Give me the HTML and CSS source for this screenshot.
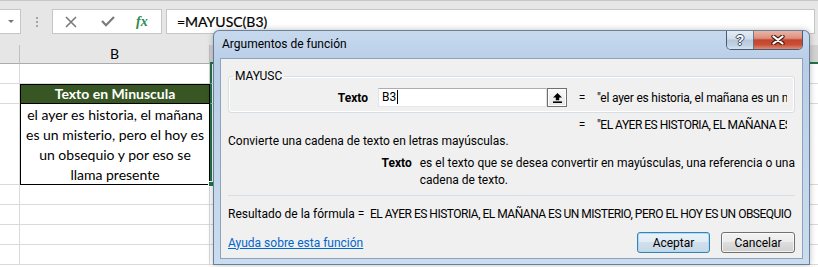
FILE: index.html
```html
<!DOCTYPE html>
<html lang="es">
<head>
  <meta charset="UTF-8" />
  <title>Argumentos de función</title>
  <link rel="stylesheet" href="styles.css">
</head>
<body>
  <div class="excel">
    <div class="formula-bar">
      <div class="name-box"><span class="drop"></span></div>
      <div class="grip"><i></i><i></i><i></i></div>
      <div class="fbtns">
        <svg class="ico-x" width="12" height="12" viewBox="0 0 12 12"><path d="M1 1L11 11M11 1L1 11" stroke="#7a7a7a" stroke-width="1.6"/></svg>
        <svg class="ico-ok" width="14" height="11" viewBox="0 0 14 11"><path d="M1 5L5 9.2L13 1" fill="none" stroke="#7a7a7a" stroke-width="2.2"/></svg>
        <span class="fx">fx</span>
      </div>
      <div class="finput">=MAYUSC(B3)</div>
    </div>

    <div class="col-heads">
      <div class="ch"></div>
      <div class="ch">B</div>
      <div class="ch ch-sel"></div>
    </div>

    <div class="sheet">
      <div class="cell"></div><div class="cell"></div><div class="cell sel"></div>
      <div class="cell"></div><div class="cell head">Texto en Minuscula</div><div class="cell sel"></div>
      <div class="cell"></div>
      <div class="cell body">el ayer es historia, el mañana<br>es un misterio, pero el hoy es<br>un obsequio y por eso se<br>llama presente</div>
      <div class="cell sel handle"></div>
      <div class="cell"></div><div class="cell"></div><div class="cell"></div>
      <div class="cell"></div><div class="cell"></div><div class="cell"></div>
      <div class="cell"></div><div class="cell"></div><div class="cell"></div>
      <div class="cell"></div><div class="cell"></div><div class="cell"></div>
    </div>
  </div>

  <div class="dlg">
    <div class="dlg-title">Argumentos de función</div>
    <div class="dlg-ctrl">
      <span class="btn-help">?</span>
      <span class="btn-close">
        <svg width="14" height="10" viewBox="0 0 14 10"><path d="M2.5 1.5L11.5 8.5M11.5 1.5L2.5 8.5" stroke="#4a1e15" stroke-width="4.4" stroke-linecap="round"/><path d="M2.5 1.5L11.5 8.5M11.5 1.5L2.5 8.5" stroke="#fff" stroke-width="2.2" stroke-linecap="round"/></svg>
      </span>
    </div>

    <div class="dlg-body">
      <fieldset class="fgroup">
        <legend>MAYUSC</legend>
        <div class="arg-row">
          <label class="arg-name" for="arg1">Texto</label>
          <div class="arg-input" id="arg1">B3<span class="caret"></span></div>
          <button class="ref-btn" type="button">
            <svg width="9" height="10" viewBox="0 0 9 10"><path d="M4.5 0L9 4.5H6.2V7.2H2.8V4.5H0Z" fill="#000"/><rect x="0" y="8.4" width="9" height="1.6" fill="#000"/></svg>
          </button>
          <span class="eq">=</span>
          <span class="arg-val">"el ayer es historia, el mañana es un misterio, pero el hoy es un obsequio y por eso se llama presente"</span>
        </div>
      </fieldset>

      <div class="res-row">
        <span class="eq">=</span>
        <span class="arg-val caps">"EL AYER ES HISTORIA, EL MAÑANA ES UN MISTERIO, PERO EL HOY ES UN OBSEQUIO Y POR ESO SE LLAMA PRESENTE"</span>
      </div>

      <p class="fn-desc">Convierte una cadena de texto en letras mayúsculas.</p>

      <div class="arg-desc">
        <b>Texto</b>
        <span>es el texto que se desea convertir en mayúsculas, una referencia o una<br>cadena de texto.</span>
      </div>

      <hr class="sep">

      <div class="result">
        <span class="result-label">Resultado de la fórmula =</span>
        <span class="result-val caps">EL AYER ES HISTORIA, EL MAÑANA ES UN MISTERIO, PERO EL HOY ES UN OBSEQUIO Y POR ESO SE LLAMA PRESENTE</span>
      </div>

      <div class="dlg-foot">
        <a href="#" class="help-link">Ayuda sobre esta función</a>
        <div class="actions">
          <button type="button" class="btn default">Aceptar</button>
          <button type="button" class="btn">Cancelar</button>
        </div>
      </div>
    </div>
  </div>
</body>
</html>
```

FILE: styles.css
```css
*, *::before, *::after { box-sizing: border-box; }
html { overflow: hidden; }
body {
  margin: 0;
  width: 818px; height: 267px;
  overflow: hidden;
  position: relative;
  background: #fff;
  font-family: Lato, sans-serif;
  color: #000;
}

/* barra de fórmulas */
.formula-bar {
  height: 45px;
  background: #e6e6e6;
  border-top: 1px solid #c6c6c6;
  padding-top: 8px;
  display: flex; align-items: flex-start;
}
.name-box {
  width: 21px; height: 25px;
  background: #fff;
  border: 1px solid #c6c6c6; border-left: none;
  display: flex; align-items: center; justify-content: flex-end;
  padding-right: 6px;
}
.drop {
  width: 0; height: 0;
  border-left: 3px solid transparent;
  border-right: 3px solid transparent;
  border-top: 3px solid #777;
}
.grip {
  width: 31px; height: 25px;
  display: flex; flex-direction: column; align-items: center; justify-content: center;
  gap: 2px;
}
.grip i { width: 2px; height: 2px; background: #a6a6a6; }
.fbtns {
  width: 110px; height: 25px;
  background: #fff;
  border: 1px solid #c6c6c6;
  display: flex; align-items: center;
  padding-left: 12px;
}
.ico-ok { margin-left: 24px; }
.fx {
  margin-left: 21px;
  font-family: "Liberation Serif", serif;
  font-style: italic; font-weight: bold;
  font-size: 14px;
  color: #2d8a55;
}
.finput {
  flex: 1;
  margin: 0 3px 0 4px;
  height: 25px;
  background: #fff;
  border: 1px solid #c6c6c6;
  padding-left: 10px;
  font-size: 14px; line-height: 23px;
  -webkit-text-stroke: .2px #000;
}

/* cabeceras */
.col-heads {
  height: 19px;
  display: grid; grid-template-columns: 20px 190px 1fr;
  background: #e6e6e6;
}
.ch {
  border-right: 1px solid #c0c0c0;
  border-bottom: 1px solid #ababab;
  font-size: 14px; line-height: 18px;
  text-align: center;
}
.ch-sel { background: #d2d2d2; border-bottom: 2px solid #217346; border-right: none; }

/* hoja */
.sheet {
  display: grid;
  grid-template-columns: 20px 190px 1fr;
  grid-template-rows: 20px 20px 81px;
  grid-auto-rows: 20px;
  height: 203px;
  overflow: hidden;
}
.cell {
  border-right: 1px solid #dadada;
  border-bottom: 1px solid #dadada;
  font-size: 14px; line-height: 20px;
  white-space: nowrap;
}
.cell:nth-child(3n) { border-right: none; }
.cell.head {
  background: #375623;
  color: #fff; font-weight: bold;
  text-align: center;
  border: 1px solid #000;
  line-height: 18px;
}
.cell.body {
  border: 1px solid #000; border-top: none;
  text-align: center;
  padding-top: 1px;
}
.cell.sel { border-left: 2px solid #217346; }
.cell.handle { position: relative; }
.cell.handle::after {
  content: '';
  position: absolute; left: -4px; bottom: -3px;
  width: 6px; height: 6px;
  background: #217346;
  border: 1px solid #fff;
}

/* ventana de diálogo */
.dlg {
  position: absolute;
  left: 213px; top: 30px;
  width: 597px; height: 235px;
  border: 1px solid rgba(45,65,95,.6);
  border-radius: 6px 6px 0 0;
  background: linear-gradient(180deg, #c6d9ee 0%, #b8cee7 14%, #c3d6eb 60%, #cadcef 100%);
  box-shadow: 0 0 6px rgba(0,0,0,.25);
  padding: 0 6px 5px;
  display: flex; flex-direction: column;
  font-family: Roboto, "Noto Sans", sans-serif;
  font-size: 12px;
}
.dlg-title {
  height: 27px; line-height: 27px;
  padding-left: 2px;
}
.dlg-ctrl {
  position: absolute; top: 0; right: 6px;
  display: flex;
  border: 1px solid rgba(35,50,70,.75); border-top: none;
  border-radius: 0 0 5px 5px;
  overflow: hidden;
}
.btn-help, .btn-close {
  height: 18px;
  display: flex; align-items: center; justify-content: center;
}
.btn-help {
  width: 27px;
  border-right: 1px solid rgba(35,50,70,.6);
  background: linear-gradient(180deg, #e4ecf5 0%, #d0dcea 45%, #b5c7dc 50%, #c2d2e4 80%, #d6e2ef 100%);
  color: #fff;
  font: bold 14px "Liberation Sans", sans-serif;
  text-shadow: 1px 0 0 #3c4b60, -1px 0 0 #3c4b60, 0 1px 0 #3c4b60, 0 -1px 0 #3c4b60;
}
.btn-close {
  width: 48px;
  background: linear-gradient(180deg, #e9b4a7 0%, #dd8f7d 40%, #c6432b 50%, #c94e36 75%, #de8c75 100%);
}

.dlg-body {
  flex: 1;
  background: #f0f0f0;
  border: 1px solid #8ea2ba;
  padding: 0 7px 4px;
}
.fgroup {
  margin: 10px 0 0;
  padding: 5px 0;
  border: 1px solid #d5dfe5;
  border-radius: 3px;
  box-shadow: inset 0 0 0 1px #fff;
}
.fgroup legend {
  margin-left: 4px;
  padding: 0 2px;
  line-height: 14px;
}
.arg-row {
  display: flex; align-items: center;
  height: 19px;
}
.arg-name {
  width: 139px;
  text-align: right;
  font-weight: bold;
}
.arg-input {
  margin-left: 10px;
  width: 169px; height: 19px;
  background: #fff;
  border: 1px solid #abadb3;
  border-color: #abadb3 #dbdfe6 #e3e9ef #e2e3ea;
  padding-left: 3px;
  line-height: 17px;
}
.caret {
  display: inline-block;
  width: 1px; height: 14px;
  background: #000;
  vertical-align: -3px;
  margin-left: 1px;
}
.ref-btn {
  width: 20px; height: 19px;
  padding: 0;
  border: 1px solid #707070;
  background: linear-gradient(180deg, #fafafa, #e6e6e6);
  box-shadow: inset 0 0 0 1px #fff;
  display: flex; align-items: center; justify-content: center;
}
.eq { width: 30px; text-align: center; }
.arg-val {
  width: 190px;
  white-space: nowrap; overflow: hidden;
  letter-spacing: -.2px;
}
.caps { letter-spacing: -.5px; }
.res-row {
  display: flex;
  margin: 4px 0 0 339px;
  line-height: 16px;
}
.fn-desc { margin: 0; line-height: 16px; }
.arg-desc {
  display: flex;
  margin-top: 6px;
  line-height: 17px;
}
.arg-desc b { width: 197px; text-align: right; }
.arg-desc span { margin-left: 8px; white-space: nowrap; }
.sep {
  margin: 6px 0 0;
  border: none;
  border-top: 1px solid #d5dfe5;
}
.result {
  display: flex;
  margin-top: 10px;
  line-height: 16px;
}
.result-label { width: 142px; flex: none; }
.result-val { width: 422px; flex: none; white-space: nowrap; overflow: hidden; }
.dlg-foot {
  display: flex; justify-content: space-between; align-items: center;
  margin-top: 10px;
}
.help-link { color: #0066cc; }
.actions { display: flex; gap: 11px; }
.btn {
  width: 74px; height: 21px;
  padding: 0;
  font: inherit;
  border: 1px solid #707070;
  border-radius: 3px;
  background: linear-gradient(180deg, #f2f2f2 0%, #ebebeb 50%, #dddddd 50%, #cfcfcf 100%);
  box-shadow: inset 0 0 0 1px rgba(255,255,255,.7);
}
.btn.default {
  width: 73px;
  border-color: #3c7fb1;
  background: linear-gradient(180deg, #eaf3fa 0%, #e0ebf4 50%, #d0dfeb 50%, #c7d8e6 100%);
  box-shadow: inset 0 0 0 1px #a8dcf7;
}
```
